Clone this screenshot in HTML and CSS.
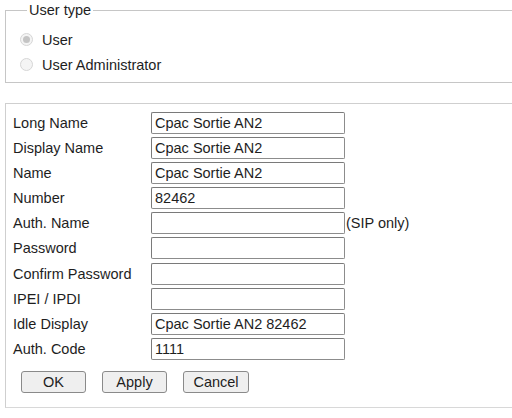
FILE: index.html
```html
<!DOCTYPE html>
<html>
<head>
<meta charset="utf-8">
<link rel="stylesheet" href="styles.css">
</head>
<body>
<fieldset class="usertype">
  <legend class="legend">User type</legend>
  <label class="radio-row"><input type="radio" name="ut" class="radio" checked disabled><span>User</span></label>
  <label class="radio-row"><input type="radio" name="ut" class="radio" disabled><span>User Administrator</span></label>
</fieldset>

<div class="panel">
  <div class="form-grid">
    <span class="lbl">Long Name</span><input class="field" type="text" value="Cpac Sortie AN2"><span></span>
    <span class="lbl">Display Name</span><input class="field" type="text" value="Cpac Sortie AN2"><span></span>
    <span class="lbl">Name</span><input class="field" type="text" value="Cpac Sortie AN2"><span></span>
    <span class="lbl">Number</span><input class="field" type="text" value="82462"><span></span>
    <span class="lbl">Auth. Name</span><input class="field" type="text" value=""><span class="note">(SIP only)</span>
    <span class="lbl">Password</span><input class="field" type="password" value=""><span></span>
    <span class="lbl">Confirm Password</span><input class="field" type="password" value=""><span></span>
    <span class="lbl">IPEI / IPDI</span><input class="field" type="text" value=""><span></span>
    <span class="lbl">Idle Display</span><input class="field" type="text" value="Cpac Sortie AN2 82462"><span></span>
    <span class="lbl">Auth. Code</span><input class="field" type="text" value="1111"><span></span>
  </div>
  <div class="buttons">
    <button class="btn btn-ok" type="button">OK</button>
    <button class="btn" type="button">Apply</button>
    <button class="btn btn-cancel" type="button">Cancel</button>
  </div>
</div>
</body>
</html>
```

FILE: styles.css
```css
html, body {
  margin: 0;
  padding: 0;
  background: #ffffff;
}
body {
  font-family: "Liberation Sans", Arial, sans-serif;
  font-size: 14.5px;
  color: #1e1e1e;
  padding-left: 5px;
}
.usertype {
  margin: 2px 0 0 0;
  padding: 8px 0 5px 14px;
  border: 1px solid #c6c6c6;
  border-right: none;
  min-width: 0;
}
.legend {
  padding: 0 2px;
  margin-left: 7px;
  line-height: 17px;
}
.radio-row {
  display: flex;
  align-items: center;
  height: 25px;
}
.radio {
  appearance: none;
  -webkit-appearance: none;
  width: 13px;
  height: 13px;
  margin: 0 9px 0 0;
  border: 1px solid #d6d6d6;
  border-radius: 50%;
  background: #f4f4f4;
  box-sizing: border-box;
  position: relative;
}
.radio:checked::after {
  content: "";
  position: absolute;
  left: 2px;
  top: 2px;
  width: 7px;
  height: 7px;
  border-radius: 50%;
  background: #c4c4c4;
}
.panel {
  margin-top: 20px;
  border: 1px solid #cfcfcf;
  border-right: none;
  border-bottom-color: #d8d8d8;
  padding: 7.5px 0 14px 7px;
}
.form-grid {
  display: grid;
  grid-template-columns: 138px 194px auto;
  grid-auto-rows: 22px;
  row-gap: 3.2px;
  align-items: center;
}
.field {
  width: 194px;
  height: 22px;
  box-sizing: border-box;
  border: 1px solid #8c8c8c;
  border-top-color: #7a7a7a;
  border-left-color: #7a7a7a;
  border-radius: 2px;
  padding: 0 3px;
  margin: 0;
  font-family: "Liberation Sans", Arial, sans-serif;
  font-size: 14.5px;
  color: #1e1e1e;
  background: #fff;
  outline: none;
}
.note {
  padding-left: 1px;
}
.buttons {
  display: flex;
  gap: 16px;
  margin-top: 10.5px;
  padding-left: 8px;
}
.btn {
  width: 65px;
  height: 22px;
  box-sizing: border-box;
  margin: 0;
  padding: 0;
  font-family: "Liberation Sans", Arial, sans-serif;
  font-size: 14.5px;
  color: #1e1e1e;
  background: #efefef;
  border: 1px solid #8a8a8a;
  border-radius: 3px;
}
.btn-cancel {
  width: 66px;
}
```
